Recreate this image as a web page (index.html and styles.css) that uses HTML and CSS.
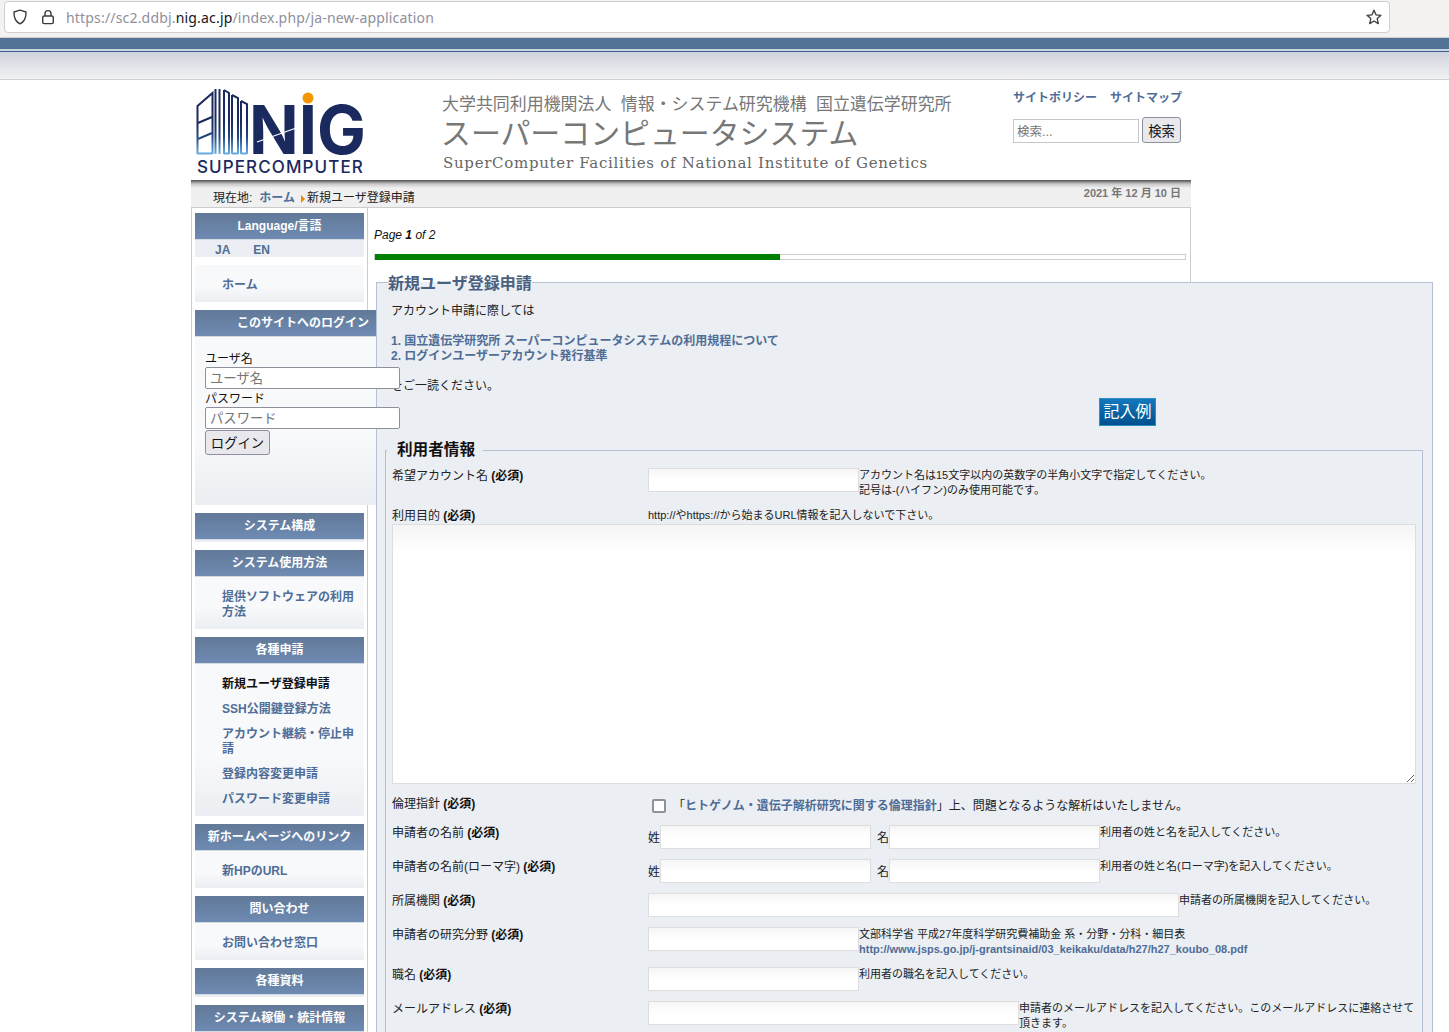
FILE: index.html
```html
<!DOCTYPE html>
<html lang="ja">
<head>
    <meta charset="UTF-8">
    <meta name="viewport" content="width=device-width, initial-scale=1.0">
    <title>新規ユーザ登録申請</title>
    <link rel="stylesheet" href="styles.css">
</head>
<body>
    <!-- browser address bar -->
    <div class="browser-bar">
        <div class="url-box">
            <svg class="url-icon" width="16" height="16" viewBox="0 0 16 16" fill="none" stroke="#3b3b40" stroke-width="1.4"><path d="M8 1.2 L14 3 C14.2 9 12 13 8 14.8 C4 13 1.8 9 2 3 Z" stroke-linejoin="round"/></svg>
            <svg class="url-icon lock" width="16" height="16" viewBox="0 0 16 16" fill="none" stroke="#3b3b40" stroke-width="1.4"><rect x="2.7" y="7" width="10.6" height="7.6" rx="1.5"/><path d="M5 7 V4.6 a3 3 0 0 1 6 0 V7"/></svg>
            <span class="url-text">https://sc2.ddbj.<b>nig.ac.jp</b>/index.php/ja-new-application</span>
            <svg class="url-star" width="16" height="16" viewBox="0 0 16 16" fill="none" stroke="#3b3b40" stroke-width="1.3"><path d="M8 1.2 L10 5.8 L15 6.3 L11.2 9.6 L12.3 14.6 L8 12 L3.7 14.6 L4.8 9.6 L1 6.3 L6 5.8 Z" stroke-linejoin="round"/></svg>
        </div>
    </div>

    <div class="top-band"></div>
    <div class="top-shade"></div>

    <div class="wrapper">
        <!-- site header -->
        <header class="site-header">
            <div class="logo">
                <svg class="logo-mark" width="176" height="74" viewBox="0 0 176 74">
                    <defs>
                        <linearGradient id="bld" gradientUnits="userSpaceOnUse" x1="0" y1="40" x2="0" y2="72">
                            <stop offset="0" stop-color="#1b2a5e"/>
                            <stop offset="0.45" stop-color="#23457f"/>
                            <stop offset="1" stop-color="#6aaee6"/>
                        </linearGradient>
                    </defs>
                    <g fill="none" stroke="url(#bld)" stroke-width="2">
                        <path d="M6.5 72 V24 L21.5 11 V72"/>
                        <path d="M7 41 L21 35 M7 57 L21 51"/>
                        <path d="M24.5 72 V7 M28.5 72 V7"/>
                        <path d="M33 72 V8 M33 8 L38 11 V72"/>
                        <path d="M41 72 V13 M41 13 L47 16 V72"/>
                        <path d="M50 72 V19 M50 19 L56 22 V72"/>
                        <path d="M6 71.5 H21 M33 71.5 H38 M41 71.5 H47 M50 71.5 H56"/>
                    </g>
                    <circle cx="117" cy="16" r="5.5" fill="#f39800"/>
                    <text class="logo-nig" x="58" y="72" textLength="117" lengthAdjust="spacingAndGlyphs">NIG</text>
                    <path d="M66 60 L108 45" stroke="#ffffff" stroke-width="1.2"/>
                </svg>
                <span class="logo-name">SUPERCOMPUTER</span>
            </div>
            <div class="site-title">
                <p class="title-org">大学共同利用機関法人&nbsp; 情報・システム研究機構&nbsp; 国立遺伝学研究所</p>
                <p class="title-main">スーパーコンピュータシステム</p>
                <p class="title-en">SuperComputer Facilities of National Institute of Genetics</p>
            </div>
            <div class="header-right">
                <div class="header-links">
                    <a href="#">サイトポリシー</a>
                    <a href="#">サイトマップ</a>
                </div>
                <form class="search-form">
                    <input class="search-input" type="text" placeholder="検索...">
                    <button class="btn" type="button">検索</button>
                </form>
            </div>
        </header>

        <div class="breadcrumb">
            <div class="crumbs">
                <span class="crumb-here">現在地:</span>
                <a href="#">ホーム</a>
                <span class="crumb-arrow"></span>
                <span>新規ユーザ登録申請</span>
            </div>
            <div class="date">2021 年 12 月 10 日</div>
        </div>

        <div class="columns">
            <!-- left menu -->
            <aside class="sidebar">
                <div class="module">
                    <h3>Language/言語</h3>
                    <div class="lang-list"><a href="#">JA</a><a href="#">EN</a></div>
                </div>
                <div class="module">
                    <ul class="menu"><li><a href="#">ホーム</a></li></ul>
                </div>
                <div class="module module-login">
                    <h3>このサイトへのログイン</h3>
                    <div class="login-body">
                        <label for="user">ユーザ名</label>
                        <input id="user" class="login-input" type="text" placeholder="ユーザ名">
                        <label for="pass">パスワード</label>
                        <input id="pass" class="login-input" type="text" placeholder="パスワード">
                        <button class="btn login-btn" type="button">ログイン</button>
                    </div>
                </div>
                <div class="module">
                    <h3>システム構成</h3>
                    <div class="empty"></div>
                </div>
                <div class="module">
                    <h3>システム使用方法</h3>
                    <ul class="menu"><li><a href="#">提供ソフトウェアの利用方法</a></li></ul>
                </div>
                <div class="module">
                    <h3>各種申請</h3>
                    <ul class="menu">
                        <li><a class="current" href="#">新規ユーザ登録申請</a></li>
                        <li><a href="#">SSH公開鍵登録方法</a></li>
                        <li><a href="#">アカウント継続・停止申請</a></li>
                        <li><a href="#">登録内容変更申請</a></li>
                        <li><a href="#">パスワード変更申請</a></li>
                    </ul>
                </div>
                <div class="module">
                    <h3>新ホームページへのリンク</h3>
                    <ul class="menu"><li><a href="#">新HPのURL</a></li></ul>
                </div>
                <div class="module">
                    <h3>問い合わせ</h3>
                    <ul class="menu"><li><a href="#">お問い合わせ窓口</a></li></ul>
                </div>
                <div class="module">
                    <h3>各種資料</h3>
                    <div class="empty"></div>
                </div>
                <div class="module">
                    <h3>システム稼働・統計情報</h3>
                    <div class="empty"></div>
                </div>
            </aside>

            <!-- main form -->
            <main class="content">
                <p class="page-count">Page <b>1</b> of 2</p>
                <div class="progress"><div class="progress-fill" style="width: 50%"></div></div>

                <fieldset class="outer-set">
                    <legend>新規ユーザ登録申請</legend>
                    <p class="intro">アカウント申請に際しては</p>
                    <p class="intro-links">
                        <a href="#">1. 国立遺伝学研究所 スーパーコンピュータシステムの利用規程について</a><br>
                        <a href="#">2. ログインユーザーアカウント発行基準</a>
                    </p>
                    <p class="intro-end">をご一読ください。</p>
                    <div class="example-wrap"><a class="example-btn" href="#">記入例</a></div>

                    <fieldset class="inner-set">
                        <legend>利用者情報</legend>

                        <div class="row row-tall">
                            <div class="row-label">希望アカウント名 <b>(必須)</b></div>
                            <div class="row-field">
                                <input class="text-input w-211" type="text">
                                <div class="help">アカウント名は15文字以内の英数字の半角小文字で指定してください。<br>記号は-(ハイフン)のみ使用可能です。</div>
                            </div>
                        </div>

                        <div class="row row-text">
                            <div class="row-label">利用目的 <b>(必須)</b></div>
                            <div class="help">http://やhttps://から始まるURL情報を記入しないで下さい。</div>
                            <textarea class="text-area"></textarea>
                        </div>

                        <div class="row row-check">
                            <div class="row-label">倫理指針 <b>(必須)</b></div>
                            <div class="row-field check-field">
                                <span class="check-box"></span>
                                <span>「<a href="#">ヒトゲノム・遺伝子解析研究に関する倫理指針</a>」上、問題となるような解析はいたしません。</span>
                            </div>
                        </div>

                        <div class="row">
                            <div class="row-label">申請者の名前 <b>(必須)</b></div>
                            <div class="row-field">
                                <span class="name-tag">姓</span><input class="text-input w-211" type="text">
                                <span class="name-tag tag-given">名</span><input class="text-input w-211" type="text">
                                <div class="help">利用者の姓と名を記入してください。</div>
                            </div>
                        </div>

                        <div class="row">
                            <div class="row-label">申請者の名前(ローマ字) <b>(必須)</b></div>
                            <div class="row-field">
                                <span class="name-tag">姓</span><input class="text-input w-211" type="text">
                                <span class="name-tag tag-given">名</span><input class="text-input w-211" type="text">
                                <div class="help">利用者の姓と名(ローマ字)を記入してください。</div>
                            </div>
                        </div>

                        <div class="row">
                            <div class="row-label">所属機関 <b>(必須)</b></div>
                            <div class="row-field">
                                <input class="text-input w-531" type="text">
                                <div class="help">申請者の所属機関を記入してください。</div>
                            </div>
                        </div>

                        <div class="row row-tall">
                            <div class="row-label">申請者の研究分野 <b>(必須)</b></div>
                            <div class="row-field">
                                <input class="text-input w-211" type="text">
                                <div class="help">文部科学省 平成27年度科学研究費補助金 系・分野・分科・細目表<br><a href="#">http://www.jsps.go.jp/j-grantsinaid/03_keikaku/data/h27/h27_koubo_08.pdf</a></div>
                            </div>
                        </div>

                        <div class="row">
                            <div class="row-label">職名 <b>(必須)</b></div>
                            <div class="row-field">
                                <input class="text-input w-211" type="text">
                                <div class="help">利用者の職名を記入してください。</div>
                            </div>
                        </div>

                        <div class="row row-tall">
                            <div class="row-label">メールアドレス <b>(必須)</b></div>
                            <div class="row-field">
                                <input class="text-input w-371" type="text">
                                <div class="help">申請者のメールアドレスを記入してください。このメールアドレスに連絡させて頂きます。</div>
                            </div>
                        </div>
                    </fieldset>
                </fieldset>
            </main>
        </div>
    </div>
</body>
</html>
```

FILE: styles.css
```css
* {
    box-sizing: border-box;
}

html, body {
    height: 1032px;
    overflow: hidden;
}

body {
    margin: 0;
    background: #ffffff;
    color: #222222;
    font-family: "Liberation Sans", "Noto Sans CJK JP", sans-serif;
    font-size: 12px;
    line-height: 15px;
}

a {
    color: #4f6d97;
    font-weight: bold;
    text-decoration: none;
}

p {
    margin: 0;
}

/* browser bar */
.browser-bar {
    height: 38px;
    padding: 1px 59px 0 4px;
    background: #f3f2f0;
    border-bottom: 1px solid #cfcfcf;
}

.url-box {
    display: flex;
    align-items: center;
    height: 32px;
    padding: 0 7px 0 7px;
    background: #ffffff;
    border: 1px solid #cfcfd3;
    border-radius: 4px;
    font-family: "Noto Sans", sans-serif;
    font-size: 14px;
    letter-spacing: 0.18px;
    color: #8f8f9d;
}

.url-icon.lock {
    margin-left: 12px;
}

.url-text {
    margin-left: 10px;
    flex: 1;
}

.url-text b {
    color: #15141a;
    font-weight: normal;
}

/* blue bands under the browser */
.top-band {
    height: 14px;
    background: #537396;
    border-bottom: 1px solid #3f6391;
    box-shadow: inset 0 -2px 0 #c9d6e4;
}

.top-shade {
    height: 28px;
    background: linear-gradient(#d0d3dd, #f2f2f3);
    border-bottom: 1px solid #cdd2dc;
}

.wrapper {
    width: 1000px;
    margin-left: 191px;
}

/* header */
.site-header {
    display: flex;
    height: 100px;
}

.logo {
    width: 251px;
}

.logo-mark {
    display: block;
    margin-top: 2px;
    overflow: visible;
}

.logo-nig {
    font-family: "Inter", sans-serif;
    font-weight: 700;
    font-size: 68px;
    fill: #1b2a5e;
}

.logo-name {
    display: block;
    margin: 1px 0 0 6px;
    font-family: "Inter", sans-serif;
    font-size: 17px;
    font-weight: 500;
    letter-spacing: 1.1px;
    line-height: 20px;
    color: #1b2a5e;
    white-space: nowrap;
}

.site-title {
    width: 571px;
    color: #777777;
    white-space: nowrap;
    padding-top: 15px;
}

.title-org {
    font-size: 16.95px;
    line-height: 20px;
}

.title-main {
    margin: 2px 0 0 -1px;
    font-size: 29.9px;
    line-height: 34px;
}

.title-en {
    margin-top: 1px;
    margin-left: 1px;
    font-family: "DejaVu Serif", serif;
    font-size: 15px;
    line-height: 22px;
    letter-spacing: 0.7px;
    color: #666666;
}

.header-right {
    padding-top: 11px;
}

.header-links {
    display: flex;
    gap: 13px;
    white-space: nowrap;
}

.search-form {
    display: flex;
    align-items: flex-end;
    gap: 3px;
    margin-top: 11px;
}

.search-input {
    width: 126px;
    height: 24px;
    padding: 2px 3px 0;
    border: 1px solid #c8c8c8;
    font-size: 12.5px;
    font-family: inherit;
}

.btn {
    padding: 0;
    background: #e9e9ed;
    border: 1px solid #8f8f9d;
    border-radius: 3px;
    color: #111111;
    font-family: inherit;
    font-size: 13.33px;
}

.search-form .btn {
    width: 39px;
    height: 26px;
}

/* breadcrumb */
.breadcrumb {
    display: flex;
    justify-content: space-between;
    height: 28px;
    padding: 10px 10px 0 22px;
    background: linear-gradient(#4f4f4f, #c9c9c9 4px, #f0f0f0 8px);
    border-bottom: 1px solid #cccccc;
}

.crumbs {
    display: flex;
    align-items: center;
    height: 15px;
    margin-top: 1px;
}

.crumb-here {
    margin-right: 7px;
}

.crumb-arrow {
    width: 0;
    height: 0;
    margin: 1px 2px 0 6px;
    border-left: 4px solid #f08a00;
    border-top: 4px solid transparent;
    border-bottom: 4px solid transparent;
}

.date {
    margin-top: -4px;
    color: #777777;
    font-size: 11px;
    font-weight: bold;
}

/* columns */
.columns {
    display: flex;
    height: 824px;
}

.sidebar {
    width: 177px;
    flex: none;
    padding: 5px 0 0 3px;
    border-left: 1px solid #cccccc;
    border-right: 1px solid #cccccc;
}

.module {
    width: 169px;
    margin-bottom: 8px;
}

.module h3 {
    margin: 0;
    height: 27px;
    background: linear-gradient(#5d7595, #6a88b1);
    border-bottom: 1px solid #d3d9e2;
    color: #ffffff;
    font-size: 12px;
    line-height: 27px;
    text-align: center;
    white-space: nowrap;
    opacity: 0.97;
}

.module-login {
    width: 216px;
}

.lang-list {
    display: flex;
    gap: 23px;
    height: 17px;
    padding: 3px 0 0 20px;
    background: #ebeef2;
}

.menu {
    margin: 0;
    padding: 6px 10px 6px 27px;
    list-style: none;
    background: linear-gradient(#f8f9fb, #f8f9fb 60%, #ebeef2);
}

.menu li {
    padding: 7px 0 3px;
}

.menu a.current {
    color: #111111;
}

.empty {
    height: 2px;
    background: #ebeef2;
}

.login-body {
    height: 168px;
    padding: 15px 0 0 10px;
    background: linear-gradient(#f8f9fb, #f8f9fb 60%, #ebeef2);
}

.login-body label {
    display: block;
    color: #111111;
    height: 15px;
}

.login-input {
    position: relative;
    z-index: 2;
    display: block;
    width: 195px;
    height: 22px;
    margin-bottom: 3px;
    padding: 0 4px;
    background: #ffffff;
    border: 1px solid #8f8f9d;
    border-radius: 2px;
    font-family: inherit;
    font-size: 13.33px;
}

.login-btn {
    display: block;
    width: 65px;
    height: 25px;
    margin-top: -2px;
}

/* main */
.content {
    flex: 1;
    min-width: 0;
    padding: 20px 0 0 6px;
    border-right: 1px solid #cccccc;
}

.page-count {
    height: 14px;
    font-style: italic;
    color: #111111;
    line-height: 14px;
}

.progress {
    width: 812px;
    height: 6px;
    margin-top: 12px;
    background: #ffffff;
    border: 1px solid #cccccc;
}

.progress-fill {
    height: 6px;
    margin: -1px 0;
    background: #008000;
}

.outer-set {
    position: relative;
    z-index: 1;
    width: 1055px;
    margin: 10px 0 0 2px;
    padding: 10px 9px 0 14px;
    background: #ebeef2;
    border: 1px solid #b4c0d4;
    border-bottom: 0;
}

.outer-set > legend {
    margin-left: -3px;
    padding: 4px 0 0;
    color: #4a6080;
    font-size: 16px;
    font-weight: bold;
    line-height: 20px;
}

.intro-links {
    margin-top: 15px;
}

.intro-end {
    margin-top: 15px;
}

.example-wrap {
    height: 28px;
    margin-top: 4px;
    padding-left: 708px;
}

.example-btn {
    display: block;
    width: 57px;
    height: 28px;
    background: linear-gradient(#1479bd, #00508f);
    border: 1px solid #2a8fc7;
    color: #ffffff;
    font-size: 16px;
    font-weight: normal;
    line-height: 26px;
    text-align: center;
}

.inner-set {
    width: 1036px;
    margin: 14px 0 0 -6px;
    padding: 8px 6px 0 6px;
    border: 1px solid #b4c0d4;
    border-bottom: 0;
}

.inner-set > legend {
    margin-left: -5px;
    padding: 0 8px 0 10px;
    color: #111111;
    font-size: 15.6px;
    font-weight: bold;
    line-height: 20px;
}

.row {
    display: grid;
    grid-template-columns: 256px 1fr;
    min-height: 24px;
    margin-bottom: 10px;
}

.row-tall {
    min-height: 30px;
}

.row-text .text-area {
    grid-column: 1 / 3;
}

.row-label {
    padding-top: 1px;
    line-height: 14px;
}

.row-label b {
    color: #111111;
}

.row-field {
    display: flex;
    align-items: flex-start;
}

.row-check {
    min-height: 21px;
    padding-top: 2px;
}

.check-field {
    align-items: center;
    padding-left: 4px;
    line-height: 14px;
}

.check-box {
    width: 14px;
    height: 14px;
    margin-right: 7px;
    background: #ffffff;
    border: 2px solid #8f8f9d;
    border-radius: 2px;
    flex: none;
}

.text-input {
    height: 24px;
    flex: none;
    padding: 0 3px;
    background: linear-gradient(#f5f5f5, #ffffff 50%);
    border: 1px solid #dddddd;
}

.w-211 {
    width: 211px;
}

.w-531 {
    width: 531px;
}

.w-371 {
    width: 371px;
}

.name-tag {
    width: 12px;
    flex: none;
    margin-top: 6px;
}

.tag-given {
    width: 18px;
    padding-left: 6px;
}

.help {
    font-size: 11px;
    line-height: 14.5px;
}

.row-text .help {
    padding-bottom: 1.5px;
}

.text-area {
    display: block;
    width: 1024px;
    height: 260px;
    background: linear-gradient(#f5f5f5, #ffffff 30px);
    border: 1px solid #dddddd;
}
```
